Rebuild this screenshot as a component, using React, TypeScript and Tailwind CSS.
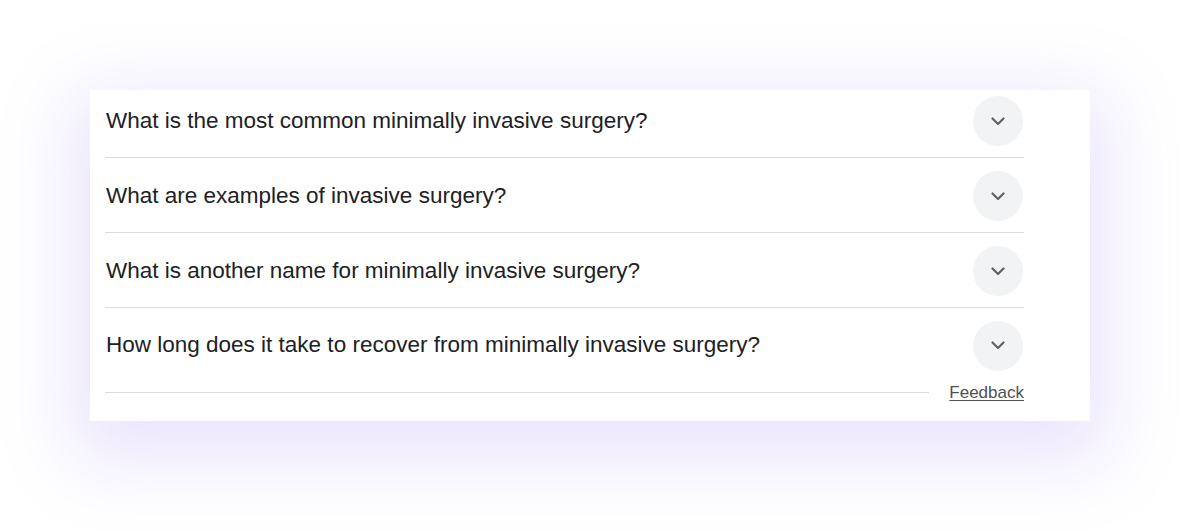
import React from 'react';

const questions = [
  'What is the most common minimally invasive surgery?',
  'What are examples of invasive surgery?',
  'What is another name for minimally invasive surgery?',
  'How long does it take to recover from minimally invasive surgery?',
];

const Chevron = () => (
  <svg width="14" height="9" viewBox="0 0 14 9" fill="none">
    <path d="M1.5 1.5 L7 7 L12.5 1.5" stroke="#5f6368" strokeWidth="2.2" strokeLinecap="round" strokeLinejoin="round" />
  </svg>
);

const App: React.FC = () => {
  return (
    <div className="w-[1200px] h-[531px] bg-white pt-[90px] pl-[90px] overflow-hidden" style={{ fontFamily: '"Liberation Sans", Arial, sans-serif' }}>
      <div className="w-[1000px] h-[331px] bg-white shadow-[0_22px_70px_18px_rgba(130,95,235,0.17)] pl-[15px] pr-[66px]">
        {questions.map((q, i) => (
          <div
            key={q}
            className={`flex items-center justify-between ${i < 3 ? 'border-b border-[#dadce0]' : ''} ${
              i === 0 ? 'h-[68px] pb-[5px]' : i === 3 ? 'h-[75px]' : 'h-[75px] pt-[2px]'
            }`}
          >
            <span className="text-[22.5px] text-[#202124] pl-[1px] leading-none">{q}</span>
            <div className="w-[50px] h-[50px] rounded-full bg-[#f1f3f4] flex items-center justify-center mr-[1px]">
              <Chevron />
            </div>
          </div>
        ))}
        <div className="flex items-center h-[18px]">
          <div className="flex-1 border-t border-[#dadce0] mr-[20px]" />
          <a className="text-[17px] text-[#4d5156] underline underline-offset-2 leading-none">Feedback</a>
        </div>
      </div>
    </div>
  );
};

export default App;
